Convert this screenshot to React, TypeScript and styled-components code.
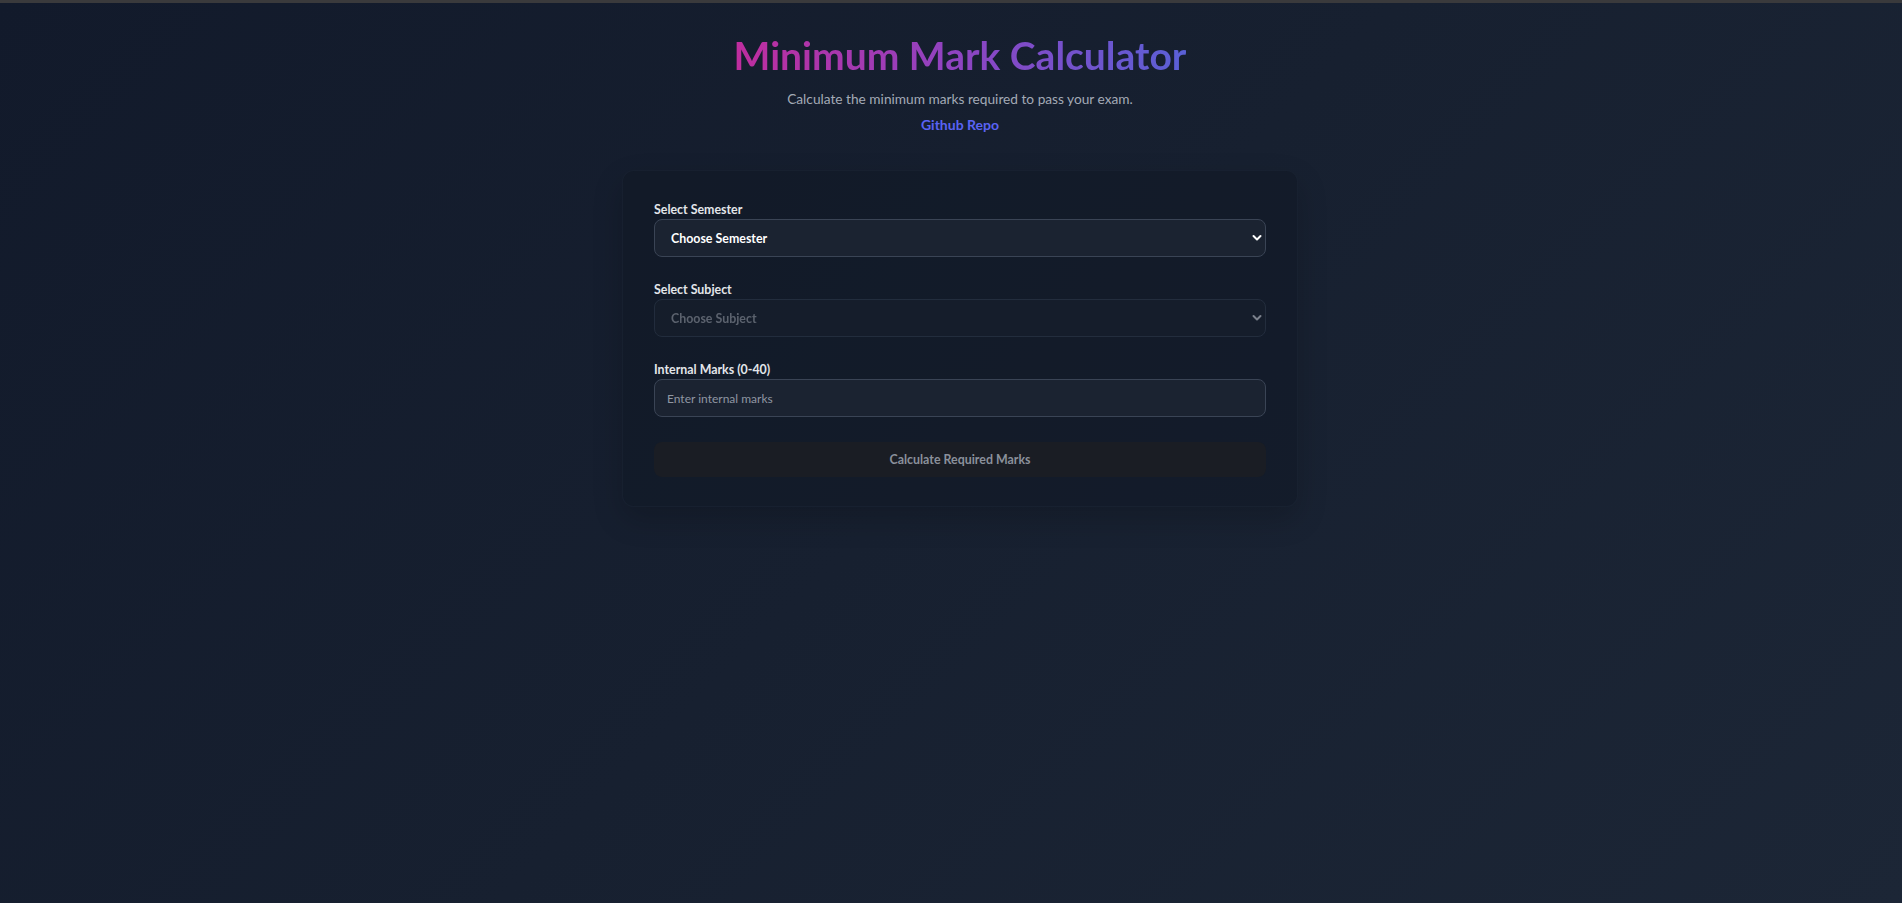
import React from 'react';
import styled, { createGlobalStyle } from 'styled-components';

const GlobalStyle = createGlobalStyle`
  html, body {
    margin: 0;
    padding: 0;
  }
  body {
    font-family: Lato, "Open Sans", sans-serif;
    background: #111827;
  }
  * {
    box-sizing: border-box;
  }
`;

const Page = styled.div`
  min-height: 100vh;
  display: flex;
  flex-direction: column;
  background: linear-gradient(135deg, #121a2b 0%, #172030 50%, #1c2636 100%);
`;

const TopBar = styled.div`
  height: 3px;
  background: #3a3a3c;
`;

const Main = styled.main`
  display: flex;
  flex-direction: column;
  align-items: center;
  padding: 29px 0 40px 18px;
`;

const Title = styled.h1`
  margin: 0;
  font-size: 39px;
  line-height: 47px;
  font-weight: 700;
  background: linear-gradient(90deg, #bf2d9e 0%, #8e44c2 50%, #5a60d6 100%);
  -webkit-background-clip: text;
  background-clip: text;
  color: transparent;
`;

const Subtitle = styled.p`
  margin: 10px 0 0;
  font-size: 13.7px;
  line-height: 20px;
  color: #a3aab6;
`;

const RepoLink = styled.a`
  margin-top: 6px;
  font-size: 14px;
  line-height: 20px;
  font-weight: 700;
  color: #5a63f4;
  text-decoration: none;
`;

const Card = styled.form`
  margin-top: 35px;
  width: 676px;
  padding: 31px 31px 29px 31px;
  display: flex;
  flex-direction: column;
  gap: 25px;
  background: rgba(17, 23, 37, 0.55);
  border: 1px solid rgba(40, 50, 66, 0.25);
  border-radius: 12px;
  box-shadow: 0 12px 30px rgba(0, 0, 0, 0.18);
`;

const Field = styled.div`
  display: flex;
  flex-direction: column;
`;

const Label = styled.label`
  font-size: 12.4px;
  line-height: 16px;
  font-weight: 700;
  color: #e3e6ea;
  margin-bottom: 1px;
`;

const SelectWrap = styled.div`
  position: relative;
`;

const Select = styled.select<{ $disabled?: boolean }>`
  appearance: none;
  -webkit-appearance: none;
  width: 100%;
  height: 38px;
  padding: 0 32px 0 16px;
  font-family: inherit;
  font-size: 12.4px;
  font-weight: 700;
  color: ${p => (p.$disabled ? '#7b818c' : '#ffffff')};
  background: ${p => (p.$disabled ? '#171f2c' : '#1b2331')};
  border: 1px solid ${p => (p.$disabled ? '#2a3546' : '#3a4455')};
  border-radius: 8px;
  outline: none;
`;

const Chevron = styled.svg<{ $disabled?: boolean }>`
  position: absolute;
  right: 4px;
  top: 50%;
  margin-top: -4px;
  width: 10px;
  height: 8px;
  color: ${p => (p.$disabled ? '#7b818c' : '#ffffff')};
  pointer-events: none;
`;

const Input = styled.input`
  width: 100%;
  height: 38px;
  padding: 0 12px;
  font-family: inherit;
  font-size: 12px;
  color: #ffffff;
  background: #1b2331;
  border: 1px solid #3a4455;
  border-radius: 8px;
  outline: none;

  &::placeholder {
    color: #8f96a2;
  }
`;

const Button = styled.button`
  height: 35px;
  width: 100%;
  border: none;
  border-radius: 8px;
  background: #1a1d24;
  color: #8a909b;
  font-family: inherit;
  font-size: 12.4px;
  font-weight: 700;
  cursor: not-allowed;
`;

function Arrow({ disabled }: { disabled?: boolean }) {
  return (
    <Chevron $disabled={disabled} viewBox="0 0 10 8">
      <path d="M1.5 2 L5 5.5 L8.5 2" fill="none" stroke="currentColor" strokeWidth="2" strokeLinecap="round" strokeLinejoin="round" />
    </Chevron>
  );
}

export default function App() {
  return (
    <Page>
      <GlobalStyle />
      <TopBar />
      <Main>
        <Title>Minimum Mark Calculator</Title>
        <Subtitle>Calculate the minimum marks required to pass your exam.</Subtitle>
        <RepoLink href="#">Github Repo</RepoLink>

        <Card onSubmit={e => e.preventDefault()}>
          <Field>
            <Label>Select Semester</Label>
            <SelectWrap>
              <Select defaultValue="">
                <option value="">Choose Semester</option>
              </Select>
              <Arrow />
            </SelectWrap>
          </Field>

          <Field>
            <Label>Select Subject</Label>
            <SelectWrap>
              <Select $disabled disabled defaultValue="">
                <option value="">Choose Subject</option>
              </Select>
              <Arrow disabled />
            </SelectWrap>
          </Field>

          <Field>
            <Label>Internal Marks (0-40)</Label>
            <Input type="number" placeholder="Enter internal marks" />
          </Field>

          <Button type="submit" disabled>Calculate Required Marks</Button>
        </Card>
      </Main>
    </Page>
  );
}
